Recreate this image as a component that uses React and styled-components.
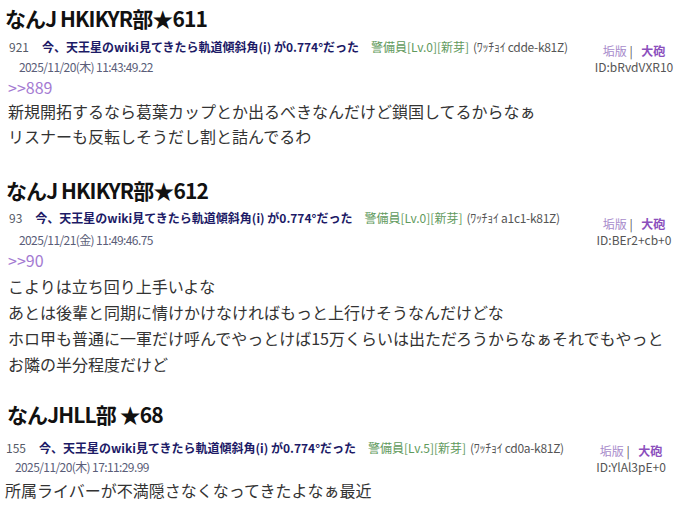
import React from "react";
import styled, { createGlobalStyle } from "styled-components";

const GlobalStyle = createGlobalStyle`
  body {
    margin: 0;
    background: #fff;
    font-family: "Noto Sans CJK JP", "Noto Sans", sans-serif;
  }
`;

const Page = styled.div`
  width: 698px;
  height: 515px;
  overflow: hidden;
  padding-top: 4px;
  box-sizing: border-box;
`;

const Section = styled.section`
  margin-top: ${(p) => p.gap}px;
  padding-left: ${(p) => p.pad}px;
`;

const ThreadTitle = styled.h2`
  margin: 0 0 0 ${(p) => p.shift}px;
  font-size: 21px;
  line-height: 28px;
  font-weight: 700;
  color: #111;
  letter-spacing: -0.9px;
`;

const MetaRow = styled.div`
  display: flex;
  align-items: flex-end;
  justify-content: space-between;
  margin-top: ${(p) => p.gap}px;
`;

const MetaLeft = styled.div`
  display: flex;
  flex-direction: column;
`;

const HeadLine = styled.div`
  display: flex;
  align-items: baseline;
  font-size: 12px;
  line-height: ${(p) => p.lh}px;
  margin-left: ${(p) => p.shift}px;
  white-space: nowrap;
`;

const ResNo = styled.span`
  color: #555a66;
`;

const PostTitle = styled.span`
  margin-left: 13px;
  font-weight: 700;
  color: #1c1a66;
`;

const Rank = styled.span`
  margin-left: 12px;
  color: #5f9a5c;
`;

const Trip = styled.span`
  margin-left: 4px;
  color: #555;
  letter-spacing: -0.3px;
`;

const DateLine = styled.div`
  font-size: 12px;
  line-height: 20px;
  color: #5a5d78;
  letter-spacing: -0.6px;
  margin-top: ${(p) => p.gap}px;
  padding-left: ${(p) => p.indent}px;
`;

const MetaRight = styled.div`
  width: 90px;
  margin-right: ${(p) => p.right}px;
  padding-bottom: 2px;
  text-align: center;
  font-size: 12px;
  line-height: 16px;
  color: #555;
`;

const Badge = styled.span`
  color: #a88bcb;
`;

const Cannon = styled.span`
  margin-left: 6px;
  color: #8c4fbd;
  font-weight: 700;
`;

const Anchor = styled.div`
  font-size: 16px;
  line-height: 20px;
  color: #a47ad2;
`;

const Body = styled.div`
  margin-top: ${(p) => p.gap}px;
  font-size: 16px;
  line-height: ${(p) => p.lh}px;
  color: #333;
  white-space: nowrap;
`;

const threads = [
  {
    title: "なんJ HKIKYR部★611",
    no: "921",
    rank: "警備員[Lv.0][新芽]",
    trip: "(ﾜｯﾁｮｲ cdde-k81Z)",
    date: "2025/11/20(木) 11:43:49.22",
    id: "ID:bRvdVXR10",
    anchor: ">>889",
    lines: [
      "新規開拓するなら葛葉カップとか出るべきなんだけど鎖国してるからなぁ",
      "リスナーも反転しそうだし割と詰んでるわ",
    ],
    layout: { gap: 0, pad: 8, shift: -3, metaGap: 5, headLh: 20, headShift: 1, dateGap: 0, dateIndent: 11, right: 19, bodyGap: 2, bodyLh: 25 },
  },
  {
    title: "なんJ HKIKYR部★612",
    no: "93",
    rank: "警備員[Lv.0][新芽]",
    trip: "(ﾜｯﾁｮｲ a1c1-k81Z)",
    date: "2025/11/21(金) 11:49:46.75",
    id: "ID:BEr2+cb+0",
    anchor: ">>90",
    lines: [
      "こよりは立ち回り上手いよな",
      "あとは後輩と同期に情けかけなければもっと上行けそうなんだけどな",
      "ホロ甲も普通に一軍だけ呼んでやっとけば15万くらいは出ただろうからなぁそれでもやっと",
      "お隣の半分程度だけど",
    ],
    layout: { gap: 27, pad: 8, shift: -2, metaGap: 4, headLh: 20, headShift: 1, dateGap: 2, dateIndent: 11, right: 19, bodyGap: 3, bodyLh: 26 },
  },
  {
    title: "なんJHLL部 ★68",
    no: "155",
    rank: "警備員[Lv.5][新芽]",
    trip: "(ﾜｯﾁｮｲ cd0a-k81Z)",
    date: "2025/11/20(木) 17:11:29.99",
    id: "ID:YlAl3pE+0",
    lines: ["所属ライバーが不満隠さなくなってきたよなぁ最近"],
    layout: { gap: 23, pad: 5, shift: 2, metaGap: 11, headLh: 18, headShift: 1, dateGap: 0, dateIndent: 10, right: 22, bodyGap: 1, bodyLh: 25 },
  },
];

function Thread({ t }) {
  const l = t.layout;
  return (
    <Section gap={l.gap} pad={l.pad}>
      <ThreadTitle shift={l.shift}>{t.title}</ThreadTitle>
      <MetaRow gap={l.metaGap}>
        <MetaLeft>
          <HeadLine lh={l.headLh} shift={l.headShift}>
            <ResNo>{t.no}</ResNo>
            <PostTitle>今、天王星のwiki見てきたら軌道傾斜角(i) が0.774°だった</PostTitle>
            <Rank>{t.rank}</Rank>
            <Trip>{t.trip}</Trip>
          </HeadLine>
          <DateLine gap={l.dateGap} indent={l.dateIndent}>
            {t.date}
          </DateLine>
        </MetaLeft>
        <MetaRight right={l.right}>
          <div>
            <Badge>垢版</Badge> | <Cannon>大砲</Cannon>
          </div>
          <div>{t.id}</div>
        </MetaRight>
      </MetaRow>
      {t.anchor && <Anchor>{t.anchor}</Anchor>}
      <Body gap={l.bodyGap} lh={l.bodyLh}>
        {t.lines.map((line) => (
          <div key={line}>{line}</div>
        ))}
      </Body>
    </Section>
  );
}

export default function App() {
  return (
    <>
      <GlobalStyle />
      <Page>
        {threads.map((t) => (
          <Thread key={t.title} t={t} />
        ))}
      </Page>
    </>
  );
}
